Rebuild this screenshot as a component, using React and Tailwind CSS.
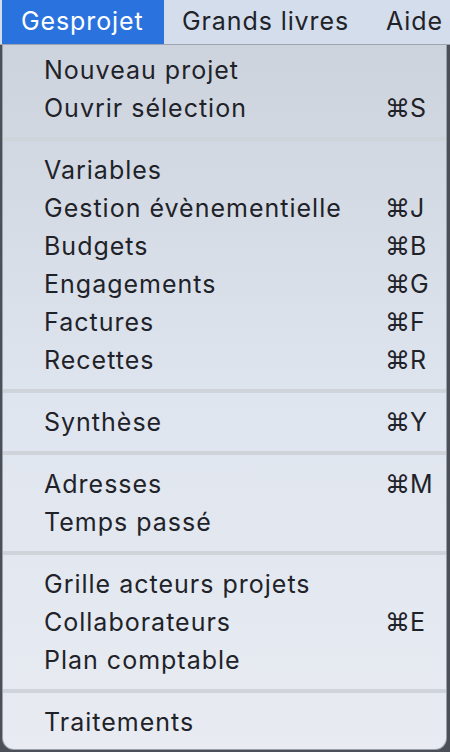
import React from "react";

const groups = [
  [
    ["Nouveau projet", ""],
    ["Ouvrir sélection", "S"],
  ],
  [
    ["Variables", ""],
    ["Gestion évènementielle", "J"],
    ["Budgets", "B"],
    ["Engagements", "G"],
    ["Factures", "F"],
    ["Recettes", "R"],
  ],
  [["Synthèse", "Y"]],
  [
    ["Adresses", "M"],
    ["Temps passé", ""],
  ],
  [
    ["Grille acteurs projets", ""],
    ["Collaborateurs", "E"],
    ["Plan comptable", ""],
  ],
  [["Traitements", ""]],
];

function Row({ label, sc }) {
  return (
    <div className="h-[38px] flex items-center pl-[41px] text-[25px] tracking-[1px] text-[#1f2329] leading-none">
      <span className="flex-1">{label}</span>
      {sc ? (
        <span className="w-[61px] flex tracking-normal">
          <span>⌘</span>
          <span>{sc}</span>
        </span>
      ) : null}
    </div>
  );
}

export default function App() {
  return (
    <div
      className="w-[450px] h-[752px] bg-[#4a4f58] overflow-hidden relative"
      style={{ fontFamily: "Inter, 'Noto Sans', sans-serif" }}
    >
      <div className="h-[44px] bg-[#d3ddec] flex items-center text-[25px] tracking-[0.9px] text-[#1f2328] pl-[2px] border-b border-[#9ea4ad] box-content">
        <div className="h-full w-[162px] bg-[#2a73df] text-white flex items-center pl-[19px]">
          Gesprojet
        </div>
        <div className="pl-[18px] whitespace-nowrap">Grands livres</div>
        <div className="pl-[37px] whitespace-nowrap">Aide</div>
      </div>
      <div className="ml-[2px] mr-[3px] h-[705px] rounded-b-[12px] border border-t-0 border-[#9aa0a8] bg-gradient-to-b from-[#cdd3dc] via-[#dfe5ef] to-[#e8ebf1] pt-[6px]">
        {groups.map((g, gi) => (
          <div key={gi}>
            {gi > 0 ? (
              <div className="h-[24px] flex items-center">
                <div className="h-[4px] w-full bg-[#cfd3da]" />
              </div>
            ) : null}
            {g.map(([l, s]) => (
              <Row key={l} label={l} sc={s} />
            ))}
          </div>
        ))}
      </div>
    </div>
  );
}
